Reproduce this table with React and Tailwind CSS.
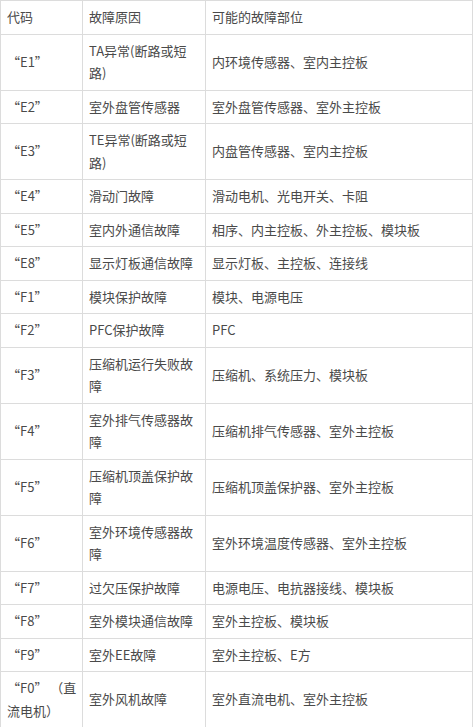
const rows = [
    ["“E1”", "TA异常(断路或短路)", "内环境传感器、室内主控板"],
    ["“E2”", "室外盘管传感器", "室外盘管传感器、室外主控板"],
    ["“E3”", "TE异常(断路或短路)", "内盘管传感器、室内主控板"],
    ["“E4”", "滑动门故障", "滑动电机、光电开关、卡阻"],
    ["“E5”", "室内外通信故障", "相序、内主控板、外主控板、模块板"],
    ["“E8”", "显示灯板通信故障", "显示灯板、主控板、连接线"],
    ["“F1”", "模块保护故障", "模块、电源电压"],
    ["“F2”", "PFC保护故障", "PFC"],
    ["“F3”", "压缩机运行失败故障", "压缩机、系统压力、模块板"],
    ["“F4”", "室外排气传感器故障", "压缩机排气传感器、室外主控板"],
    ["“F5”", "压缩机顶盖保护故障", "压缩机顶盖保护器、室外主控板"],
    ["“F6”", "室外环境传感器故障", "室外环境温度传感器、室外主控板"],
    ["“F7”", "过欠压保护故障", "电源电压、电抗器接线、模块板"],
    ["“F8”", "室外模块通信故障", "室外主控板、模块板"],
    ["“F9”", "室外EE故障", "室外主控板、E方"],
    [
        <>
            <span className="whitespace-nowrap">“F0”&nbsp;（直</span>
            <br />
            流电机）
        </>,
        "室外风机故障",
        "室外直流电机、室外主控板",
    ],
];

const cell = "border border-[#dcdcdc] px-[6px] py-[5px] align-middle";

export default function App() {
    return (
        <div className="w-[474px] bg-white">
            <table
                className="w-[473px] table-fixed border-collapse text-left text-[13px] leading-[22.5px] text-[#4a4a4a]"
                style={{ fontFamily: '"Noto Sans CJK SC", "Noto Sans", sans-serif' }}
            >
                <colgroup>
                    <col className="w-[82px]" />
                    <col className="w-[123px]" />
                    <col />
                </colgroup>
                <thead>
                <tr>
                    <th className={cell + " font-normal"}>代码</th>
                    <th className={cell + " font-normal"}>故障原因</th>
                    <th className={cell + " font-normal"}>可能的故障部位</th>
                </tr>
                </thead>
                <tbody>
                {rows.map((r, i) => (
                    <tr key={i}>
                        <td className={cell}>{r[0]}</td>
                        <td className={cell}>{r[1]}</td>
                        <td className={cell}>{r[2]}</td>
                    </tr>
                ))}
                </tbody>
            </table>
        </div>
    );
}
